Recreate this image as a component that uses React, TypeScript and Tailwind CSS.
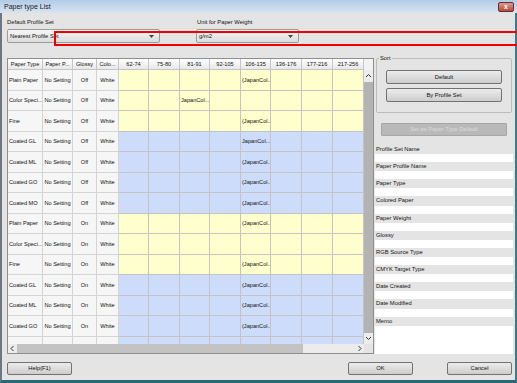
import React from 'react';

type Row = { t: string; g: string; blue: boolean; j?: [number, string] };

const rows: Row[] = [
  { t: 'Plain Paper', g: 'Off', blue: false, j: [4, '(JapanCol...'] },
  { t: 'Color Speci...', g: 'Off', blue: false, j: [2, 'JapanCol...'] },
  { t: 'Fine', g: 'Off', blue: false, j: [4, '(JapanCol...'] },
  { t: 'Coated GL', g: 'Off', blue: true, j: [4, 'JapanCol...'] },
  { t: 'Coated ML', g: 'Off', blue: true, j: [4, '(JapanCol...'] },
  { t: 'Coated GO', g: 'Off', blue: true, j: [4, '(JapanCol...'] },
  { t: 'Coated MO', g: 'Off', blue: true, j: [4, '(JapanCol...'] },
  { t: 'Plain Paper', g: 'On', blue: false, j: [4, '(JapanCol...'] },
  { t: 'Color Speci...', g: 'On', blue: false },
  { t: 'Fine', g: 'On', blue: false, j: [4, '(JapanCol...'] },
  { t: 'Coated GL', g: 'On', blue: true, j: [4, '(JapanCol...'] },
  { t: 'Coated ML', g: 'On', blue: true, j: [4, '(JapanCol...'] },
  { t: 'Coated GO', g: 'On', blue: true, j: [4, '(JapanCol...'] },
  { t: 'Coated MO', g: 'On', blue: true, j: [4, '(JapanCol...'] },
];

const fixedCols = [
  { label: 'Paper Type', cls: 'w-[35px]' },
  { label: 'Paper P...', cls: 'w-[30px]' },
  { label: 'Glossy', cls: 'w-[24px]' },
  { label: 'Colo...', cls: 'w-[22px]' },
];

const wCols = [
  { label: '62-74', cls: 'w-[30px]' },
  { label: '75-80', cls: 'w-[31px]' },
  { label: '81-91', cls: 'w-[30px]' },
  { label: '92-105', cls: 'w-[31px]' },
  { label: '106-135', cls: 'w-[30px]' },
  { label: '136-176', cls: 'w-[31px]' },
  { label: '177-216', cls: 'w-[31px]' },
  { label: '217-256', cls: 'w-[31px]' },
];

const fields = [
  'Profile Set Name',
  'Paper Profile Name',
  'Paper Type',
  'Colored Paper',
  'Paper Weight',
  'Glossy',
  'RGB Source Type',
  'CMYK Target Type',
  'Date Created',
  'Date Modified',
];

function Chevron({ dir }: { dir: 'up' | 'down' | 'left' | 'right' }) {
  const pts =
    dir === 'up'
      ? '1,4 3.5,1.5 6,4'
      : dir === 'down'
      ? '1,2 3.5,4.5 6,2'
      : dir === 'left'
      ? '4.5,1 2,3.5 4.5,6'
      : '2.5,1 5,3.5 2.5,6';
  return (
    <svg width="7" height="7" viewBox="0 0 7 7">
      <polyline points={pts} fill="none" stroke="#333" strokeWidth="1" />
    </svg>
  );
}

function Caret() {
  return (
    <svg width="5" height="3" viewBox="0 0 5 3">
      <polygon points="0,0 5,0 2.5,3" fill="#444" />
    </svg>
  );
}

function Select({ text, cls }: { text: string; cls: string }) {
  return (
    <div className={`${cls} flex h-[14px] items-center rounded-[2px] border border-[#9c9c9c] bg-linear-to-b from-[#f7f7f7] to-[#dcdcdc]`}>
      <span className="flex-1 pl-[2px] leading-[12px] text-[#111]">{text}</span>
      <span className="flex h-full w-[16px] items-center justify-center">
        <Caret />
      </span>
    </div>
  );
}

function Btn({ text, cls }: { text: string; cls: string }) {
  return (
    <div className={`${cls} flex items-center justify-center rounded-[2px] border border-[#727272] bg-linear-to-b from-[#ececec] to-[#cdcdcd] text-[#111]`}>
      {text}
    </div>
  );
}

export default function App() {
  return (
    <div className="relative flex h-[383px] w-[517px] flex-col overflow-hidden bg-[#e4e4e4] font-['Liberation_Sans',Arial,sans-serif] text-[5.8px] text-[#111]">
      {/* Title bar */}
      <div className="flex h-[13px] shrink-0 items-center justify-between bg-linear-to-b from-[#b3cbe8] to-[#d8e4f2] pl-[4px] pr-[3px]">
        <span className="text-[7px] leading-[9px] text-[#1a1a1a]">Paper type List</span>
        <div className="flex h-[10px] w-[16px] items-center justify-center rounded-[2px] border border-[#6e2e25] bg-linear-to-b from-[#d99a8c] to-[#b24a3c] text-[7px] font-bold leading-[8px] text-white">
          x
        </div>
      </div>

      {/* Body */}
      <div className="flex flex-1 flex-col border-b-[3px] border-l-[2px] border-r-[2px] border-b-[#2b6877] border-l-[#6d7780] border-r-[#3a7a8a] pl-[5px] pr-[2px]">
        {/* Top selects */}
        <div className="mt-[5px] flex gap-[36px]">
          <div className="flex w-[153px] flex-col">
            <span className="h-[9px] leading-[9px]">Default Profile Set</span>
            <div className="mt-[2px]">
              <Select text="Nearest Profile Set" cls="w-[153px]" />
            </div>
          </div>
          <div className="flex w-[103px] flex-col">
            <span className="h-[9px] pl-[1px] leading-[9px]">Unit for Paper Weight</span>
            <div className="mt-[2px]">
              <Select text="g/m2" cls="w-[103px]" />
            </div>
          </div>
        </div>

        {/* Main */}
        <div className="mt-[15px] flex h-[296px] gap-[1px]">
          {/* Table */}
          <div className="flex h-[296px] w-[367px] flex-col border border-[#8f8f8f] bg-white text-[5.6px]">
            <div className="flex h-[285px]">
              <div className="flex w-[356px] flex-col overflow-hidden">
                <div className="flex h-[11px] shrink-0">
                  {[...fixedCols, ...wCols].map((c, i) => (
                    <div
                      key={i}
                      className={`${c.cls} flex shrink-0 items-center justify-center overflow-hidden whitespace-nowrap border-b border-r border-[#c6c6c6] bg-linear-to-b from-white to-[#e8e8e8] leading-[10px]`}
                    >
                      {c.label}
                    </div>
                  ))}
                </div>
                {rows.map((r, ri) => (
                  <div key={ri} className="flex h-[20.5px] shrink-0">
                    <div className="flex w-[35px] shrink-0 items-center overflow-hidden whitespace-nowrap border-b border-r border-[#d4d4d4] bg-[#f6f6f6] pl-[1px]">
                      {r.t}
                    </div>
                    <div className="flex w-[30px] shrink-0 items-center justify-center overflow-hidden whitespace-nowrap border-b border-r border-[#d4d4d4] bg-[#f6f6f6]">
                      No Setting
                    </div>
                    <div className="flex w-[24px] shrink-0 items-center justify-center border-b border-r border-[#d4d4d4] bg-[#f6f6f6]">
                      {r.g}
                    </div>
                    <div className="flex w-[22px] shrink-0 items-center justify-center border-b border-r border-[#d4d4d4] bg-[#f6f6f6]">
                      White
                    </div>
                    {wCols.map((c, ci) => (
                      <div
                        key={ci}
                        className={`${c.cls} ${r.blue ? 'bg-[#cddcfb]' : 'bg-[#ffffcd]'} flex shrink-0 items-center overflow-hidden whitespace-nowrap border-b border-r border-[#c4c4c4] pl-[1px]`}
                      >
                        {r.j && r.j[0] === ci ? r.j[1] : ''}
                      </div>
                    ))}
                  </div>
                ))}
              </div>
              {/* Vertical scrollbar */}
              <div className="flex w-[9px] flex-col bg-[#ececec]">
                <div className="h-[11px] bg-[#f2f2f2]" />
                <div className="flex h-[12px] items-center justify-center">
                  <Chevron dir="up" />
                </div>
                <div className="h-[251px] bg-[#b3b3b3]" />
                <div className="flex h-[11px] items-center justify-center">
                  <Chevron dir="down" />
                </div>
              </div>
            </div>
            {/* Horizontal scrollbar */}
            <div className="flex h-[9px] bg-[#ececec]">
              <div className="flex w-[9px] items-center justify-center">
                <Chevron dir="left" />
              </div>
              <div className="w-[286px] bg-[#c3c3c3]" />
              <div className="w-[52px]" />
              <div className="flex w-[9px] items-center justify-center">
                <Chevron dir="right" />
              </div>
              <div className="w-[9px] bg-[#e4e4e4]" />
            </div>
          </div>

          {/* Right panel */}
          <div className="flex w-[138px] flex-col">
            <div className="relative mx-[1px] flex h-[55px] flex-col gap-[4px] rounded-[2px] border border-[#bcbcbc] px-[9px] pt-[11px]">
              <span className="absolute left-[2px] top-[-5px] bg-[#e4e4e4] px-[1px] leading-[8px]">Sort</span>
              <Btn text="Default" cls="h-[14px]" />
              <Btn text="By Profile Set" cls="h-[14px]" />
            </div>
            <div className="mx-[6px] mt-[10px] flex h-[13px] items-center justify-center rounded-[1px] border border-[#a6a6a6] bg-[#b9b9b9] text-[#dcdcdc]">
              Set as Paper Type Default
            </div>
            <div className="mt-[8.8px] flex flex-col">
              {fields.map((f) => (
                <div key={f} className="flex flex-col">
                  <span className="h-[9.2px] pl-[1px] leading-[9.2px]">{f}</span>
                  <div className="h-[8px] bg-white" />
                </div>
              ))}
              <span className="h-[9.2px] pl-[1px] leading-[9.2px]">Memo</span>
              <div className="h-[28px] bg-white" />
            </div>
          </div>
        </div>

        {/* Bottom buttons */}
        <div className="mt-[8px] flex h-[13px] justify-between pr-[1px]">
          <Btn text="Help(F1)" cls="w-[65px]" />
          <div className="flex gap-[34px]">
            <Btn text="OK" cls="w-[65px]" />
            <Btn text="Cancel" cls="w-[65px]" />
          </div>
        </div>
      </div>

      {/* Red annotation frame */}
      <div className="absolute left-[54px] top-[31px] h-[15px] w-[480px] border-2 border-[#ee0000]" />
    </div>
  );
}
